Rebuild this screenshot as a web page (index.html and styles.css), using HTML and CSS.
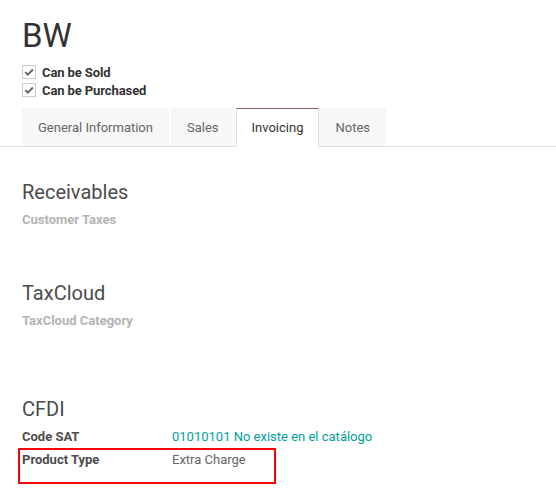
FILE: index.html
```html
<!DOCTYPE html>
<html>
<head>
<meta charset="utf-8">
<link rel="stylesheet" href="styles.css">
</head>
<body>
<div class="header">
  <h1 class="title">BW</h1>
  <div class="checks">
    <div class="check-row"><span class="box"><svg viewBox="0 0 12 12" width="12" height="12"><path d="M2.2 6.1 L4.8 8.6 L9.9 3.5" fill="none" stroke="#666" stroke-width="2"/></svg></span><span class="check-label">Can be Sold</span></div>
    <div class="check-row"><span class="box"><svg viewBox="0 0 12 12" width="12" height="12"><path d="M2.2 6.1 L4.8 8.6 L9.9 3.5" fill="none" stroke="#666" stroke-width="2"/></svg></span><span class="check-label">Can be Purchased</span></div>
  </div>
</div>
<div class="tabs">
  <div class="tab">General Information</div>
  <div class="tab">Sales</div>
  <div class="tab active">Invoicing</div>
  <div class="tab">Notes</div>
</div>
<div class="sheet">
  <h2 class="group-title first">Receivables</h2>
  <div class="muted-label">Customer Taxes</div>
  <h2 class="group-title gap">TaxCloud</h2>
  <div class="muted-label">TaxCloud Category</div>
  <h2 class="group-title gap2">CFDI</h2>
  <div class="field-row first-row"><span class="field-label">Code SAT</span><span class="field-value link">01010101 No existe en el catálogo</span></div>
  <div class="field-row"><span class="field-label">Product Type</span><span class="field-value">Extra Charge</span><span class="highlight"></span></div>
</div>
</body>
</html>
```
FILE: styles.css
```css
* { box-sizing: border-box; }
html, body { min-height: 501px; }
body {
  margin: 0;
  font-family: Roboto, "Noto Sans", sans-serif;
  font-size: 13px;
  color: #4c4c4c;
  background: #fff;
}
.header { padding: 0 22px; }
.title {
  margin: 0;
  padding-top: 16px;
  font-size: 33px;
  line-height: 40px;
  font-weight: 400;
  color: #333;
}
.checks { margin-top: 7px; }
.check-row {
  display: flex;
  align-items: center;
  height: 18px;
}
.box {
  width: 14px;
  height: 14px;
  border: 1px solid #ccc;
  display: inline-flex;
  align-items: center;
  justify-content: center;
  margin-right: 6px;
  background: #fff;
}
.box svg { display: block; }
.check-label {
  font-weight: 700;
  color: #333;
  font-size: 13px;
  letter-spacing: -0.1px;
}
.tabs {
  display: flex;
  margin-top: 9px;
  padding-left: 22px;
  border-bottom: 1px solid #ddd;
}
.tab {
  height: 39px;
  padding: 0 16px;
  display: flex;
  align-items: center;
  background: #f7f7f7;
  color: #666;
  font-size: 13px;
  margin-right: 1px;
  margin-bottom: -1px;
  border-bottom: 1px solid #ddd;
}
.tab:first-child { margin-right: 2px; }
.tab.active {
  background: #fff;
  color: #333;
  border: 1px solid #ddd;
  border-top: 1px solid #875a7b;
  border-bottom: 1px solid #fff;
  padding: 0 15px;
  margin-right: 0;
}
.sheet { padding: 0 22px 30px; }
.group-title {
  margin: 0;
  font-size: 20px;
  line-height: 24px;
  font-weight: 400;
  color: #4c4c4c;
}
.group-title.first { margin-top: 33px; }
.group-title.gap { margin-top: 52px; }
.group-title.gap2 { margin-top: 67px; }
.muted-label {
  margin-top: 7px;
  line-height: 18px;
  font-weight: 700;
  color: #b3b3b3;
}
.field-row {
  position: relative;
  display: flex;
  height: 23px;
  line-height: 18px;
}
.field-row.first-row { margin-top: 7px; }
.field-label {
  width: 150px;
  font-weight: 700;
  color: #4c4c4c;
}
.field-value { color: #666; }
.field-value.link { color: #00a09d; }
.highlight {
  position: absolute;
  left: -4px;
  top: -3px;
  width: 258px;
  height: 36px;
  border: 2px solid #f00;
}
```
